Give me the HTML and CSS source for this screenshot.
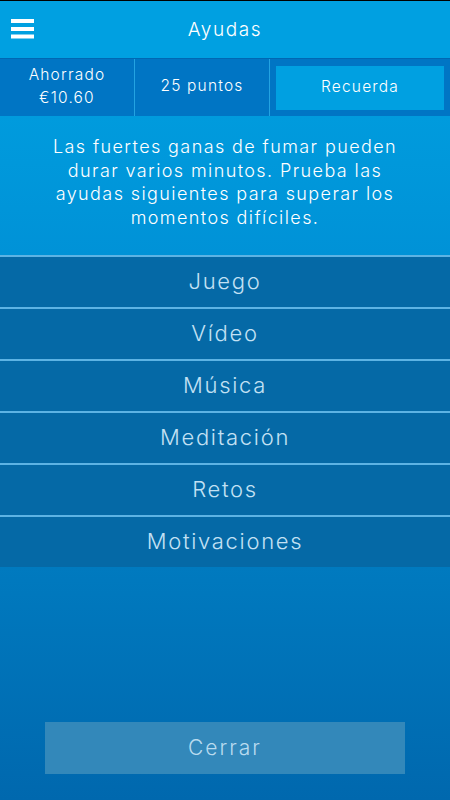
FILE: index.html
```html
<!DOCTYPE html>
<html lang="es">
<head>
    <meta charset="UTF-8">
    <meta name="viewport" content="width=device-width, initial-scale=1.0">
    <title>Ayudas</title>
    <link rel="stylesheet" href="styles.css">
</head>
<body>
    <div class="app">
        <header class="topbar">
            <span class="menu-icon">
                <svg width="24" height="20" viewBox="0 0 24 20">
                    <rect x="0" y="0" width="23" height="4" fill="#ffffff"/>
                    <rect x="0" y="8" width="23" height="4" fill="#ffffff"/>
                    <rect x="0" y="15.5" width="23" height="4" fill="#ffffff"/>
                </svg>
            </span>
            <h1>Ayudas</h1>
        </header>

        <div class="stats">
            <div class="stat">Ahorrado<br>€10.60</div>
            <div class="stat">25 puntos</div>
            <div class="stat stat-btn"><button class="remember">Recuerda</button></div>
        </div>

        <p class="intro">Las fuertes ganas de fumar pueden durar varios minutos. Prueba las ayudas siguientes para superar los momentos difíciles.</p>

        <ul class="helps">
            <li>Juego</li>
            <li>Vídeo</li>
            <li>Música</li>
            <li>Meditación</li>
            <li>Retos</li>
            <li>Motivaciones</li>
        </ul>

        <div class="bottom">
            <button class="close">Cerrar</button>
        </div>
    </div>
</body>
</html>
```

FILE: styles.css
```css
body {
    margin: 0;
    padding: 0;
    font-family: Inter, "Open Sans", sans-serif;
    font-weight: 300;
    background-color: #006aae;
    color: #ffffff;
}
.app {
    display: flex;
    flex-direction: column;
    height: 800px;
    border-top: 1px solid #000000;
    box-sizing: border-box;
}

/* Шапка */
.topbar {
    display: flex;
    align-items: center;
    justify-content: center;
    position: relative;
    height: 57px;
    background-color: #00a0e1;
}
.topbar h1 {
    margin: 0;
    font-size: 19px;
    font-weight: 300;
    letter-spacing: 1.6px;
}
.menu-icon {
    position: absolute;
    left: 11px;
    top: 18px;
    line-height: 0;
}

/* Полоса со статистикой */
.stats {
    display: grid;
    grid-template-columns: 134px 134px 1fr;
    column-gap: 1px;
    height: 58px;
    background-color: #23a3e2;
    border-top: 1px solid #0068b3;
    box-sizing: border-box;
}
.stat {
    display: flex;
    align-items: center;
    justify-content: center;
    text-align: center;
    padding-bottom: 4px;
    background-color: #0075c4;
    font-size: 15.5px;
    line-height: 23px;
    letter-spacing: 1.2px;
}
.stat-btn {
    padding: 7px 6px 6px 6px;
}
.remember {
    width: 100%;
    height: 100%;
    padding: 0 0 4px 0;
    border: none;
    background-color: #00a0e1;
    color: #ffffff;
    font-family: inherit;
    font-weight: 300;
    font-size: 15.5px;
    letter-spacing: 1.2px;
}

/* Текст */
.intro {
    margin: 0;
    height: 139px;
    box-sizing: border-box;
    padding: 19px 40px 0 40px;
    text-align: center;
    font-size: 18px;
    line-height: 23.5px;
    letter-spacing: 1.4px;
    background: linear-gradient(#009bdd, #0092d7);
}

/* Список */
.helps {
    list-style: none;
    margin: 0;
    padding: 0;
}
.helps li {
    height: 50px;
    line-height: 49px;
    border-top: 2px solid #5db3e4;
    background-color: #0569a6;
    color: #c3e1f4;
    text-align: center;
    font-size: 22px;
    letter-spacing: 1.7px;
}

.bottom {
    flex: 1;
    display: flex;
    align-items: flex-end;
    justify-content: center;
    padding-bottom: 26px;
    background: linear-gradient(#007abf, #0068ae);
}
.close {
    width: 360px;
    height: 52px;
    padding-bottom: 3px;
    border: none;
    background-color: #3388ba;
    color: #b9dbef;
    font-family: inherit;
    font-weight: 300;
    font-size: 21px;
    letter-spacing: 2px;
}
```
